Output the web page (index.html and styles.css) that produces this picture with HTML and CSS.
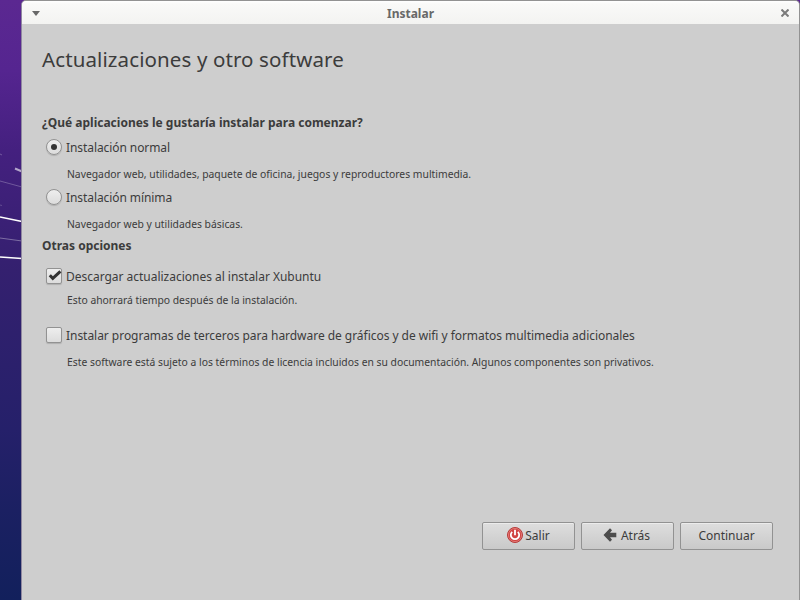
FILE: index.html
```html
<!DOCTYPE html>
<html lang="es">
<head>
<meta charset="utf-8">
<title>Instalar</title>
<link rel="stylesheet" href="styles.css">
</head>
<body>
<svg class="wallpaper" width="800" height="600" viewBox="0 0 800 600" aria-hidden="true">
  <g fill="none" stroke="#fff">
    <path d="M15 168.5l7 3" stroke-width="2" opacity=".6"/>
    <path d="M0 181l22 6" opacity=".25"/>
    <path d="M0 154l2 1" opacity=".25"/>
    <path d="M0 205l2 .5" opacity=".2"/>
    <path d="M0 217l22 4.5" stroke-width="1.5"/>
    <path d="M0 238l22 3" opacity=".35"/>
    <path d="M0 257l22 1.6" stroke-width="1.5"/>
  </g>
</svg>
<div class="window">
  <header class="titlebar">
    <svg class="menu-icon" width="8" height="5" viewBox="0 0 8 5"><path d="M0 0h8L4 5z" fill="#686868"/></svg>
    <span class="caption">Instalar</span>
    <svg class="close-icon" width="8" height="8" viewBox="0 0 8 8"><path d="M.5.5l7 7M7.5.5l-7 7" stroke="#7a7a7a" stroke-width="2" fill="none"/></svg>
  </header>
  <main class="content">
    <h1>Actualizaciones y otro software</h1>
    <h2 class="apps"><span>¿Qué aplicaciones le gustaría instalar para comenzar?</span></h2>
    <label class="option normal"><i class="radio on"></i><span>Instalación normal</span></label>
    <p class="n1"><span>Navegador web, utilidades, paquete de oficina, juegos y reproductores multimedia.</span></p>
    <label class="option minimal"><i class="radio"></i><span>Instalación mínima</span></label>
    <p class="n2"><span>Navegador web y utilidades básicas.</span></p>
    <h2 class="others"><span>Otras opciones</span></h2>
    <label class="option updates"><i class="check"><svg width="16" height="16" viewBox="0 0 16 16"><path d="M3.8 7.2l3 3.2L14.4 3.4" fill="none" stroke="#333" stroke-width="3"/></svg></i><span>Descargar actualizaciones al instalar Xubuntu</span></label>
    <p class="n3"><span>Esto ahorrará tiempo después de la instalación.</span></p>
    <label class="option third"><i class="check"></i><span>Instalar programas de terceros para hardware de gráficos y de wifi y formatos multimedia adicionales</span></label>
    <p class="n4"><span>Este software está sujeto a los términos de licencia incluidos en su documentación. Algunos componentes son privativos.</span></p>
    <footer class="actions">
      <button class="quit"><svg width="16" height="16" viewBox="0 0 16 16"><circle cx="8" cy="8" r="7.5" fill="#d14442" stroke="#b53c3b"/><circle cx="8" cy="8" r="6.6" fill="none" stroke="#e38480" stroke-width=".8"/><path d="M5.2 4.8a4.2 4.2 0 1 0 5.6 0M8 2.8v5.4" fill="none" stroke="#fff" stroke-width="1.8"/></svg><span>Salir</span></button>
      <button class="back"><svg width="14" height="14" viewBox="0 0 14 14"><path d="M.5 7L7 .3 9 2.2 7 4.8h6.3v4.4H7l2 2.6-2 1.9z" fill="#4c4c4c"/></svg><span>Atrás</span></button>
      <button><span>Continuar</span></button>
    </footer>
  </main>
</div>
</body>
</html>
```
FILE: styles.css
```css
* { box-sizing: border-box; }
body {
  margin: 0;
  width: 800px;
  height: 600px;
  overflow: hidden;
  padding-left: 21px;
  background: linear-gradient(#5b2891 0, #552590 70px, #44207f 150px, #34206f 270px, #25206a 430px, #1b2062 510px, #12205c 600px);
  font-family: "Noto Sans", sans-serif;
  font-size: 12px;
  color: #3c3c3c;
}
.wallpaper { position: absolute; left: 0; top: 0; }
.window {
  position: relative;
  height: 601px;
  border: 1px solid #929292;
  border-left-color: #9088a0;
  border-bottom: 0;
  border-radius: 5px 5px 0 0;
  background: #cecece;
  overflow: hidden;
}
.titlebar {
  height: 23px;
  display: flex;
  align-items: center;
  justify-content: space-between;
  padding: 0 10px;
  background: linear-gradient(#fff 0, #f9f9f8 3px, #f3f3f1);
}
.menu-icon { margin-top: 1px; }
.caption { font-weight: bold; color: #686868; line-height: 20px; padding-top: 2px; }
.close-icon { margin-top: 1px; }
.content { display: flex; flex-direction: column; padding: 20px 26px 0 20px; }
h1, h2, p { margin: 0; line-height: 20px; white-space: nowrap; }
h1 { font-size: 20.5px; font-weight: 400; line-height: 30px; letter-spacing: .11px; }
h2 { font-size: 12px; font-weight: bold; }
p { font-size: 10.35px; padding-left: 25px; }
.option { display: flex; align-items: center; height: 20px; padding-left: 4px; gap: 4px; white-space: nowrap; letter-spacing: -.037px; }
.normal, .minimal { letter-spacing: -.08px; }
.updates { letter-spacing: -.02px; }
.radio, .check {
  width: 16px;
  height: 16px;
  flex: none;
  border: 1px solid #929292;
  background: linear-gradient(#eee, #dcdcdc);
  box-shadow: 0 1px 1px rgba(0, 0, 0, .15);
}
.radio { border-radius: 50%; display: grid; place-items: center; }
.radio.on::after { content: ""; width: 6px; height: 6px; border-radius: 50%; background: #333; }
.check { border-radius: 2px; }
.check svg { display: block; margin: -1px; overflow: visible; }
.apps { margin-top: 39px; }
.normal { margin-top: 4px; }
.n1 { margin-top: 7px; }
.minimal { margin-top: 3px; }
.n2 { margin-top: 7px; }
.others { margin-top: 2px; }
.updates { margin-top: 10px; }
.n3 { margin-top: 4px; }
.third { margin-top: 15px; }
.n4 { margin-top: 7px; }
.actions { display: flex; justify-content: flex-end; gap: 6px; margin-top: 150px; }
button {
  width: 93px;
  height: 28px;
  padding: 0 0 1px;
  display: flex;
  align-items: center;
  justify-content: center;
  gap: 2px;
  border: 1px solid #929292;
  border-radius: 2px;
  background: linear-gradient(#dedede, #c9c9c9);
  box-shadow: inset 0 1px #ececec;
  font: inherit;
  color: inherit;
}
.quit svg { margin-top: -1px; }
.back { gap: 4px; padding-right: 2px; }
.back svg { margin-top: -1px; }
```
